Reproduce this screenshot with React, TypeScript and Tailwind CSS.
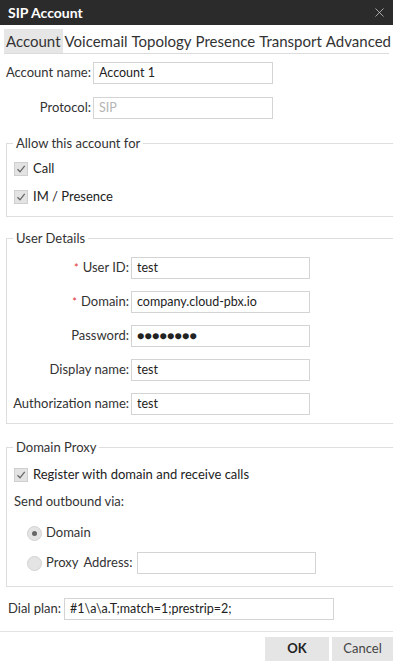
import { X } from "lucide-react";

const font = { fontFamily: 'Lato, "Open Sans", sans-serif' };

function Check({ label }: { label: string }) {
  return (
    <div className="h-[16px] flex items-center gap-[5px] text-[13px] text-[#222] whitespace-nowrap">
      <span className="w-[14px] h-[14px] shrink-0 bg-[#e3e3e3] border border-[#cfcfcf] flex items-center justify-center">
        <svg width="10" height="10" viewBox="0 0 10 10">
          <path d="M1.5 5.2 L4 7.8 L8.7 1.8" stroke="#666" strokeWidth="1.3" fill="none" />
        </svg>
      </span>
      {label}
    </div>
  );
}

function Radio({ on }: { on?: boolean }) {
  return (
    <span className="w-[15px] h-[15px] shrink-0 rounded-full bg-[#e4e4e4] border border-[#d2d2d2] flex items-center justify-center">
      {on && <span className="w-[5px] h-[5px] rounded-full bg-[#666]" />}
    </span>
  );
}

function Field({ value, w, muted }: { value: string; w: string; muted?: boolean }) {
  return (
    <div
      className={`${w} h-[22px] shrink-0 border border-[#d4d4d4] bg-white px-[5px] flex items-center text-[12.5px] whitespace-nowrap ${
        muted ? "text-[#b5b5b5]" : "text-[#222]"
      }`}
    >
      {value}
    </div>
  );
}

function Group({ title, top, children }: { title: string; top: string; children: React.ReactNode }) {
  return (
    <div className={`relative ml-[6px] ${top} border-l border-t border-b border-[#dedede]`}>
      <span className="absolute -top-[10px] left-[6px] bg-white px-[3px] text-[13px] text-[#333] leading-[18px]">
        {title}
      </span>
      {children}
    </div>
  );
}

export default function App() {
  const users = [
    { label: "User ID:", value: "test", req: true },
    { label: "Domain:", value: "company.cloud-pbx.io", req: true },
    { label: "Password:", value: "●●●●●●●●", req: false },
    { label: "Display name:", value: "test", req: false },
    { label: "Authorization name:", value: "test", req: false },
  ];
  return (
    <div className="w-[393px] h-[663px] bg-white overflow-hidden flex flex-col" style={font}>
      <div className="h-[25px] shrink-0 bg-[#2b2b2b] flex items-center justify-between pl-[8px] pr-[6px]">
        <span className="text-white text-[14px] font-bold">SIP Account</span>
        <X size={15} strokeWidth={1.2} color="#cfcfcf" />
      </div>

      <div className="mt-[4px] mx-[4px] flex border-b border-[#dcdcdc] text-[15px] text-[#333] whitespace-nowrap">
        {["Account", "Voicemail", "Topology", "Presence", "Transport", "Advanced"].map((t, i) => (
          <div key={t} className={`h-[24px] flex items-center px-[2px] ${i === 0 ? "bg-[#e6e6e6]" : ""}`}>
            {t}
          </div>
        ))}
      </div>

      <div className="mt-[8px] flex items-center">
        <span className="w-[93px] shrink-0 text-right pr-[2px] text-[13px] text-[#333] whitespace-nowrap">Account name:</span>
        <Field value="Account 1" w="w-[180px]" />
      </div>
      <div className="mt-[13px] flex items-center">
        <span className="w-[93px] shrink-0 text-right pr-[2px] text-[13px] text-[#333]">Protocol:</span>
        <Field value="SIP" w="w-[180px]" muted />
      </div>

      <Group title="Allow this account for" top="mt-[24px]">
        <div className="flex flex-col gap-[12px] pl-[7px] pt-[17px] pb-[11px]">
          <Check label="Call" />
          <Check label="IM / Presence" />
        </div>
      </Group>

      <Group title="User Details" top="mt-[21px]">
        <div className="flex flex-col gap-[12px] pt-[18px] pb-[8px]">
          {users.map((u) => (
            <div key={u.label} className="flex items-center">
              <span className="w-[124px] shrink-0 text-right pr-[2px] text-[13px] text-[#333] whitespace-nowrap">
                {u.req && <span className="text-[#e03030] text-[11px] mr-[4px]">*</span>}
                {u.label}
              </span>
              <Field value={u.value} w="w-[179px]" />
            </div>
          ))}
        </div>
      </Group>

      <Group title="Domain Proxy" top="mt-[23px]">
        <div className="flex flex-col pl-[7px] pt-[19px] pb-[12px] text-[13px] text-[#333] whitespace-nowrap">
          <Check label="Register with domain and receive calls" />
          <span className="mt-[10px] h-[16px] leading-[16px]">Send outbound via:</span>
          <div className="mt-[16px] ml-[13px] h-[16px] flex items-center gap-[4px]">
            <Radio on />
            Domain
          </div>
          <div className="mt-[11px] ml-[13px] flex items-center gap-[4px]">
            <Radio />
            <span>Proxy</span>
            <span className="ml-[1px] mr-[1px]">Address:</span>
            <Field value="" w="w-[179px]" />
          </div>
        </div>
      </Group>

      <div className="mt-[11px] flex items-center pl-[8px]">
        <span className="text-[13px] text-[#333] mr-[3px] whitespace-nowrap">Dial plan:</span>
        <Field value="#1\a\a.T;match=1;prestrip=2;" w="w-[270px]" />
      </div>

      <div className="mt-[11px] border-t border-[#e2e2e2] flex justify-end gap-[3px] pt-[5px]">
        <button className="w-[64px] h-[24px] bg-[#e5e5e5] text-[13px] font-bold text-[#222]">OK</button>
        <button className="w-[61px] h-[24px] bg-[#e5e5e5] text-[13px] text-[#444]">Cancel</button>
      </div>
    </div>
  );
}
